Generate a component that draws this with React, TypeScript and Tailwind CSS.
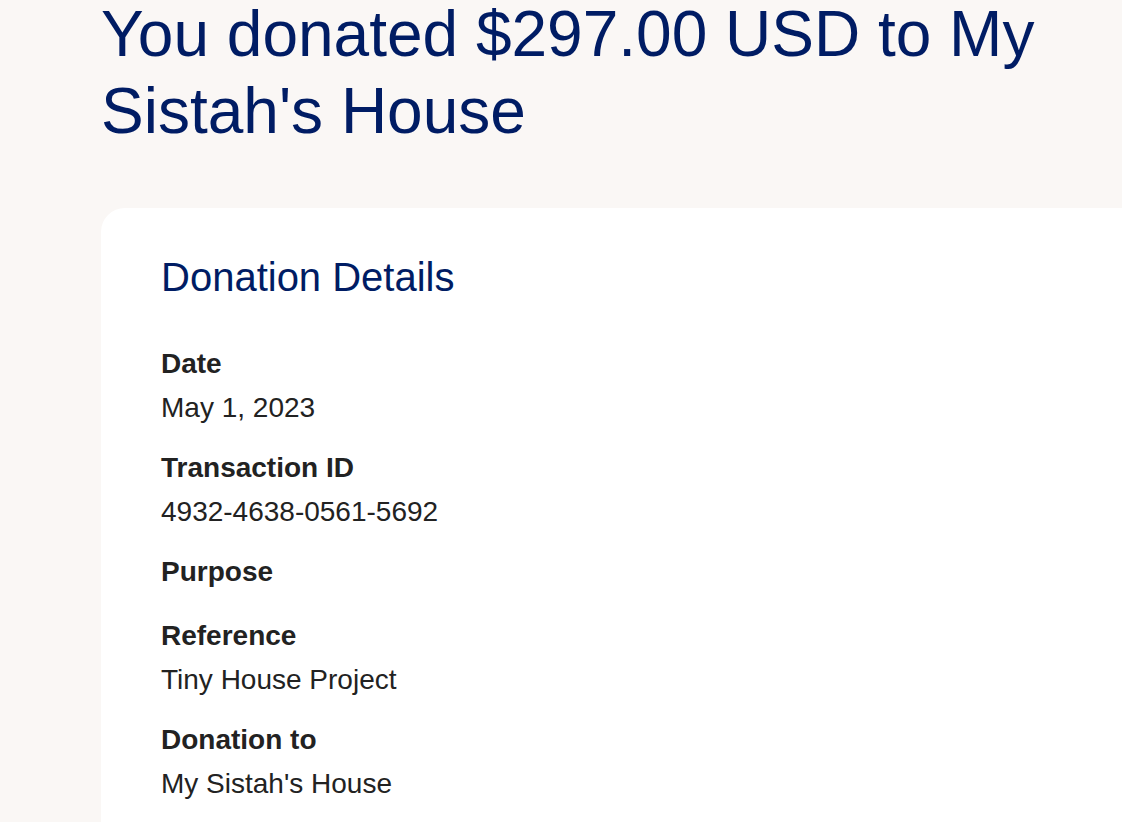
const details: { label: string; value?: string }[] = [
  { label: "Date", value: "May 1, 2023" },
  { label: "Transaction ID", value: "4932-4638-0561-5692" },
  { label: "Purpose" },
  { label: "Reference", value: "Tiny House Project" },
  { label: "Donation to", value: "My Sistah's House" },
];

const DetailItem = ({ label, value }: { label: string; value?: string }) => (
  <div className="flex flex-col">
    <div className="text-[28px] leading-[36px] font-bold text-[#222222]">{label}</div>
    {value ? (
      <div className="mt-[8px] text-[28px] leading-[36px] text-[#222222]">{value}</div>
    ) : (
      <div className="h-[4px]" />
    )}
  </div>
);

export default function App() {
  return (
    <div
      className="min-h-screen w-full overflow-hidden bg-[#faf7f5] pl-[101px]"
      style={{ fontFamily: '"Liberation Sans", Arial, Helvetica, sans-serif' }}
    >
      {/* Page heading */}
      <h1 className="mt-[-4px] text-[64px] leading-[1.2] font-normal text-[#001c64]">
        You donated $297.00 USD to My Sistah's House
      </h1>

      {/* Details card */}
      <div className="mt-[58px] w-[1100px] min-h-[700px] rounded-t-[24px] bg-white pl-[60px] pt-[45px]">
        <h2 className="text-[40px] leading-[48px] font-normal text-[#001c64]">Donation Details</h2>
        <div className="mt-[45px] flex flex-col gap-[24px]">
          {details.map((d) => (
            <DetailItem key={d.label} label={d.label} value={d.value} />
          ))}
        </div>
      </div>
    </div>
  );
}
